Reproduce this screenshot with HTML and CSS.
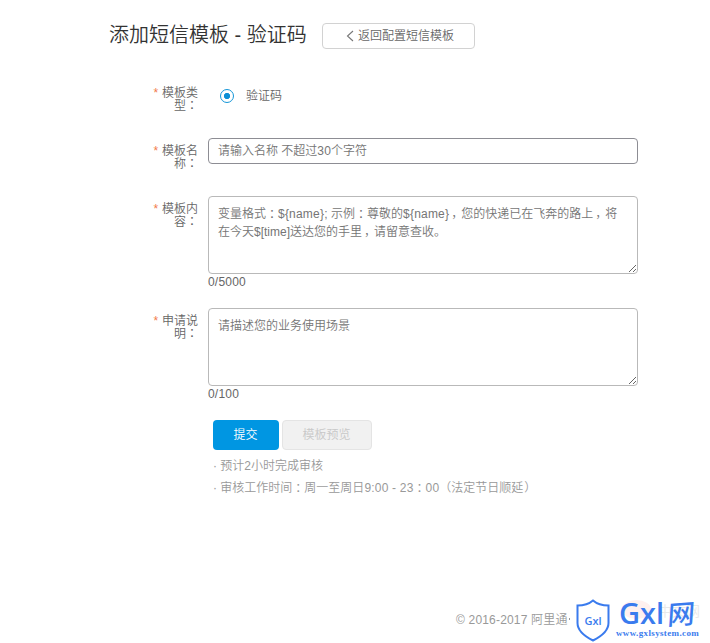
FILE: index.html
```html
<!DOCTYPE html>
<html lang="zh-CN">
<head>
<meta charset="utf-8">
<title>添加短信模板</title>
<link rel="stylesheet" href="styles.css">
</head>
<body>
<header class="head">
  <h1>添加短信模板 - 验证码</h1>
  <a class="back"><svg width="8" height="12" viewBox="0 0 8 12"><path d="M7 1 1.500 6 7 11" fill="none" stroke="#777" stroke-width="1.100"/></svg>返回配置短信模板</a>
</header>
<main class="form">
  <div class="row row-type">
    <div class="label"><div><span class="req">*</span> 模板类</div><div>型<span class="mid" lang="ja">：</span></div></div>
    <div class="field radio-line"><span class="radio"></span>验证码</div>
  </div>
  <div class="row row-name">
    <div class="label"><div><span class="req">*</span> 模板名</div><div>称<span class="mid" lang="ja">：</span></div></div>
    <div class="field"><div class="input">请输入名称 不超过<span class="lat">30</span>个字符</div></div>
  </div>
  <div class="row row-content">
    <div class="label"><div><span class="req">*</span> 模板内</div><div>容<span class="mid" lang="ja">：</span></div></div>
    <div class="field">
      <div class="area">变量格式<span class="mid" lang="ja">：</span><span class="lat">${name};</span> 示例<span class="mid" lang="ja">：</span>尊敬的<span class="lat">${name}</span><span class="comma">，</span>您的快递已在飞奔的路上<span class="comma">，</span>将<br>在今天$[time]送达您的手里<span class="comma">，</span>请留意查收。</div>
      <div class="count">0/5000</div>
    </div>
  </div>
  <div class="row row-desc">
    <div class="label"><div><span class="req">*</span> 申请说</div><div>明<span class="mid" lang="ja">：</span></div></div>
    <div class="field">
      <div class="area">请描述您的业务使用场景</div>
      <div class="count">0/100</div>
    </div>
  </div>
  <div class="actions"><button class="btn primary">提交</button><button class="btn off">模板预览</button></div>
  <ul class="notes">
    <li>· 预计2小时完成审核</li>
    <li>· 审核工作时间<span class="mid" lang="ja">：</span>周一至周日<span class="lat">9:00 - 23</span><span class="mid" lang="ja">：</span><span class="lat">00</span><span class="paren">（</span>法定节日顺延<span class="paren-end">）</span></li>
  </ul>
</main>
<footer class="foot">
  <span class="copy">© 2016-2017 阿里通<i class="cut"></i></span>
  <div class="brand">
    <svg class="shield" width="34" height="43" viewBox="0 0 34 43"><path d="M17 1.500C13 5 7 6.500 1.500 6.500V24C1.500 32 8 37 17 41.500C26 37 32.500 32 32.500 24V6.500C27 6.500 21 5 17 1.500Z" fill="#fff" stroke="#3a7bee" stroke-width="2"/><text x="17" y="26" text-anchor="middle" class="shield-text">Gxl</text></svg>
    <div class="words">
      <div class="ghost"><span>中文网</span></div>
      <div class="name"><b>Gxl</b><em>网</em></div>
      <div class="url">www.gxlsystem.com</div>
    </div>
  </div>
</footer>
</body>
</html>
```
FILE: styles.css
```css
* { box-sizing: border-box; }
body {
  margin: 0;
  width: 710px;
  height: 643px;
  overflow: hidden;
  display: flex;
  flex-direction: column;
  background: #fff;
  color: #666;
  font: 350 12px/18px "Liberation Sans", "Noto Sans CJK SC", sans-serif;
}
.head { display: flex; height: 80px; padding: 23px 0 0 109px; align-items: flex-start; }
h1 {
  margin: 0;
  width: 213px;
  font-size: 20px;
  line-height: 24px;
  font-weight: 350;
  color: #333;
  white-space: nowrap;
}
.back {
  display: flex;
  align-items: center;
  width: 153px;
  height: 26px;
  padding-left: 23px;
  gap: 4px;
  border: 1px solid #d2d2d2;
  border-radius: 4px;
}
.form { display: flex; flex-direction: column; }
.row { display: flex; padding-left: 140px; }
.row-type { height: 58px; }
.row-name { height: 58px; }
.row-content { height: 112px; }
.row-desc { height: 112px; }
.label { width: 58px; padding-top: 7px; line-height: 12px; text-align: right; white-space: nowrap; }
.label > div { height: 12px; }
.req { color: #f27b4b; margin-right: .5px; }
.mid { position: relative; top: 1px; font-family: "Noto Sans CJK JP", sans-serif; line-height: 1; }
.label .mid { top: 0; }
.lat { letter-spacing: .2px; }
.field { width: 430px; margin-left: 10px; }
.radio-line { display: flex; height: 31px; padding: 1px 0 0 12px; gap: 12px; align-items: center; }
.radio {
  width: 14px;
  height: 14px;
  border: 1px solid #1496d8;
  border-radius: 50%;
  background: radial-gradient(circle, #0c8fd6 2.8px, #fff 3.4px);
}
.input { height: 26px; padding: 3px 9px; border: 1px solid #8d8d94; border-radius: 4px; color: #757575; }
.area {
  height: 78px;
  padding: 8px 9px;
  border: 1px solid #b9b9b9;
  border-radius: 4px;
  color: #757575;
  overflow: auto;
  resize: vertical;
  white-space: nowrap;
}
.comma { position: relative; left: 2px; }
.count { line-height: 16px; letter-spacing: .2px; }
.actions { display: flex; gap: 3px; padding-left: 213px; }
.btn { height: 30px; padding: 0 1px 0 0; border: 0; border-radius: 4px; font: inherit; }
.primary { width: 66px; background: #0096e2; color: #fff; }
.off { width: 90px; background: #f1f1f1; color: #c8c8c8; border: 1px solid #e4e4e4; }
.notes { margin: 5px 0 0; padding: 0 0 0 213px; list-style: none; line-height: 22px; color: #999; }
.paren-end { position: relative; left: 1px; }
.foot { display: flex; margin-top: auto; height: 45px; padding-left: 456px; }
.copy { width: 120px; padding-top: 13px; color: #999; white-space: nowrap; letter-spacing: .18px; }
.cut { display: inline-block; width: 1px; height: 2px; margin-left: 1px; background: #999; vertical-align: 4px; }
.brand { display: flex; width: 134px; }
.shield { flex: none; margin-top: 1px; }
.shield-text { font: 600 11px "Open Sans", sans-serif; fill: #3a7bee; }
.words { position: relative; width: 100px; padding-left: 6px; color: #3a7bee; }
.ghost {
  position: absolute;
  left: 12px;
  top: 2px;
  width: 29px;
  height: 19px;
  border-radius: 50%;
  background: #fff0ee;
}
.ghost span { position: absolute; left: 36px; top: 2px; font-size: 14px; color: #e9e9e9; white-space: nowrap; }
.name { position: relative; display: flex; height: 29px; }
.name b { width: 52px; padding-left: 3px; font: 600 29px/29px "Open Sans", sans-serif; }
.name em { font: 500 27px/30px "Noto Sans CJK SC", sans-serif; transform: skewX(-8deg) rotate(-4deg); }
.url { position: relative; font: bold 9px/12px "Liberation Serif", serif; letter-spacing: .36px; white-space: nowrap; }
```
